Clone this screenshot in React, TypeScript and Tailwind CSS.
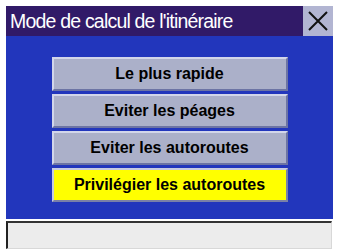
import React from "react";

const options = [
  { label: "Le plus rapide", active: false },
  { label: "Eviter les péages", active: false },
  { label: "Eviter les autoroutes", active: false },
  { label: "Privilégier les autoroutes", active: true },
];

export default function App() {
  return (
    <div
      className="w-[337px] h-[251px] bg-white pt-[6px] pl-[6px]"
      style={{ fontFamily: '"Liberation Sans", Arial, sans-serif' }}
    >
      <div className="w-[327px] flex flex-col">
        <div className="h-[30px] flex bg-[#311a68]">
          <div className="flex-1 flex items-center pl-[4px] text-white text-[19.5px] tracking-[-0.8px] leading-none pt-px">
            Mode de calcul de l'itinéraire
          </div>
          <div className="w-[30px] h-[30px] bg-[#b2b5d2] flex items-center justify-center">
            <svg width="22" height="22" viewBox="0 0 22 22">
              <path d="M2 2 L20 20 M20 2 L2 20" stroke="#111" strokeWidth="2" />
            </svg>
          </div>
        </div>
        <div className="h-[183px] bg-[#2236bc] flex flex-col items-center pt-[21px] gap-[3px]">
          {options.map((o) => (
            <div
              key={o.label}
              className={
                o.active
                  ? "w-[236px] h-[34px] flex items-center justify-center bg-[#ffff00] border-2 border-t-[#c8cce0] border-l-[#c8cce0] border-b-[#7a80a8] border-r-[#7a80a8] text-black font-bold text-[16px]"
                  : "w-[236px] h-[34px] flex items-center justify-center bg-[#abb0c9] border-2 border-t-[#d2d6ea] border-l-[#d2d6ea] border-b-[#6c74a4] border-r-[#6c74a4] text-black font-bold text-[16px]"
              }
            >
              {o.label}
            </div>
          ))}
        </div>
        <div className="mt-[2px] h-[28px] w-[326px] bg-[#ececec] border-t-2 border-l-2 border-t-[#333] border-l-[#222] border-r border-b border-r-[#d8d8d8] border-b-[#d8d8d8]" />
      </div>
    </div>
  );
}
